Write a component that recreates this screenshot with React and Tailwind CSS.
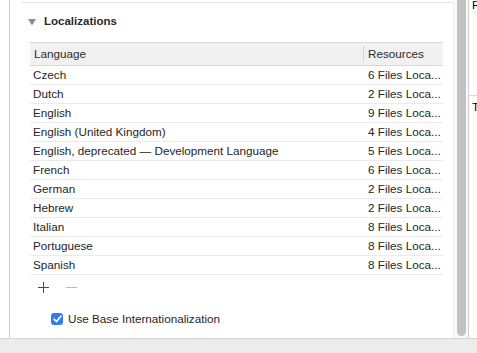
import React from 'react';

const rows = [
  ['Czech', '6 Files Loca...'],
  ['Dutch', '2 Files Loca...'],
  ['English', '9 Files Loca...'],
  ['English (United Kingdom)', '4 Files Loca...'],
  ['English, deprecated \u2014 Development Language', '5 Files Loca...'],
  ['French', '6 Files Loca...'],
  ['German', '2 Files Loca...'],
  ['Hebrew', '2 Files Loca...'],
  ['Italian', '8 Files Loca...'],
  ['Portuguese', '8 Files Loca...'],
  ['Spanish', '8 Files Loca...'],
];

export default function App() {
  return (
    <div className="w-[477px] h-[353px] flex flex-col bg-white overflow-hidden font-['Liberation_Sans',Arial,sans-serif] text-[11.7px] text-[#262626]">
      <div className="flex h-[338px]">
        <div className="w-[9px] bg-white" />
        <div className="w-[444px] border-l border-[#cfcfcf] flex flex-col">
          <div className="pt-[2px] pl-[12px]">
            <div className="border-t border-[#e4e4e4]" />
          </div>

          <div className="mt-[12px] h-[14px] flex items-center pl-[18px]">
            <svg width="8" height="7" viewBox="0 0 8 7" className="mt-[1px]">
              <polygon points="0,0 8,0 4,6.5" fill="#8d8d8d" />
            </svg>
            <span className="ml-[8px] font-bold text-[11.5px] text-[#2a2a2a]">Localizations</span>
          </div>

          <div className="mt-[13px] ml-[20px] w-[413px]">
            <div className="h-[24px] flex items-center bg-[#f1f1f1] border-t border-b border-[#d9d9d9] text-[#2b2b2b]">
              <div className="w-[333px] pl-[4px]">Language</div>
              <div className="h-[16px] border-l border-[#d4d4d4]" />
              <div className="pl-[4px]">Resources</div>
            </div>
            {rows.map(([lang, res]) => (
              <div key={lang} className="h-[19px] flex items-center border-b border-[#ebebeb]">
                <div className="w-[334px] pl-[3px] whitespace-nowrap">{lang}</div>
                <div className="pl-[4px] whitespace-nowrap">{res}</div>
              </div>
            ))}
          </div>

          <div className="mt-[7px] ml-[28px] h-[11px] flex items-center gap-[17px]">
            <svg width="11" height="11" viewBox="0 0 11 11">
              <line x1="5.5" y1="0" x2="5.5" y2="11" stroke="#4a4a4a" strokeWidth="1" />
              <line x1="0" y1="5.5" x2="11" y2="5.5" stroke="#4a4a4a" strokeWidth="1" />
            </svg>
            <svg width="11" height="11" viewBox="0 0 11 11">
              <line x1="0" y1="5.5" x2="11" y2="5.5" stroke="#b8b8b8" strokeWidth="1" />
            </svg>
          </div>

          <div className="mt-[17px] ml-[41px] flex items-center">
            <div className="w-[12px] h-[12px] rounded-[3px] bg-[#2f7cf6] flex items-center justify-center">
              <svg width="9" height="8" viewBox="0 0 9 8">
                <path d="M1.2 4.3 L3.5 6.5 L7.8 1.2" fill="none" stroke="white" strokeWidth="1.7" strokeLinecap="round" strokeLinejoin="round" />
              </svg>
            </div>
            <span className="ml-[5px]">Use Base Internationalization</span>
          </div>
        </div>

        <div className="w-[15px] border-l border-[#efefef] bg-[#fafafa] flex">
          <div className="ml-[3px] w-[9px] h-[336px] rounded-b-full bg-[#c2c2c2]" />
        </div>

        <div className="w-[9px] border-l border-[#cfcfcf] bg-white flex flex-col overflow-hidden text-black">
          <div className="h-[98px] pl-[3px] -mt-[2px] border-b border-[#d8d8d8] leading-[14px]">F</div>
          <div className="pl-[3px] pt-[4px] leading-[14px]">T</div>
        </div>
      </div>
      <div className="flex-1 bg-[#ececec] border-t border-[#d3d3d3]" />
    </div>
  );
}
